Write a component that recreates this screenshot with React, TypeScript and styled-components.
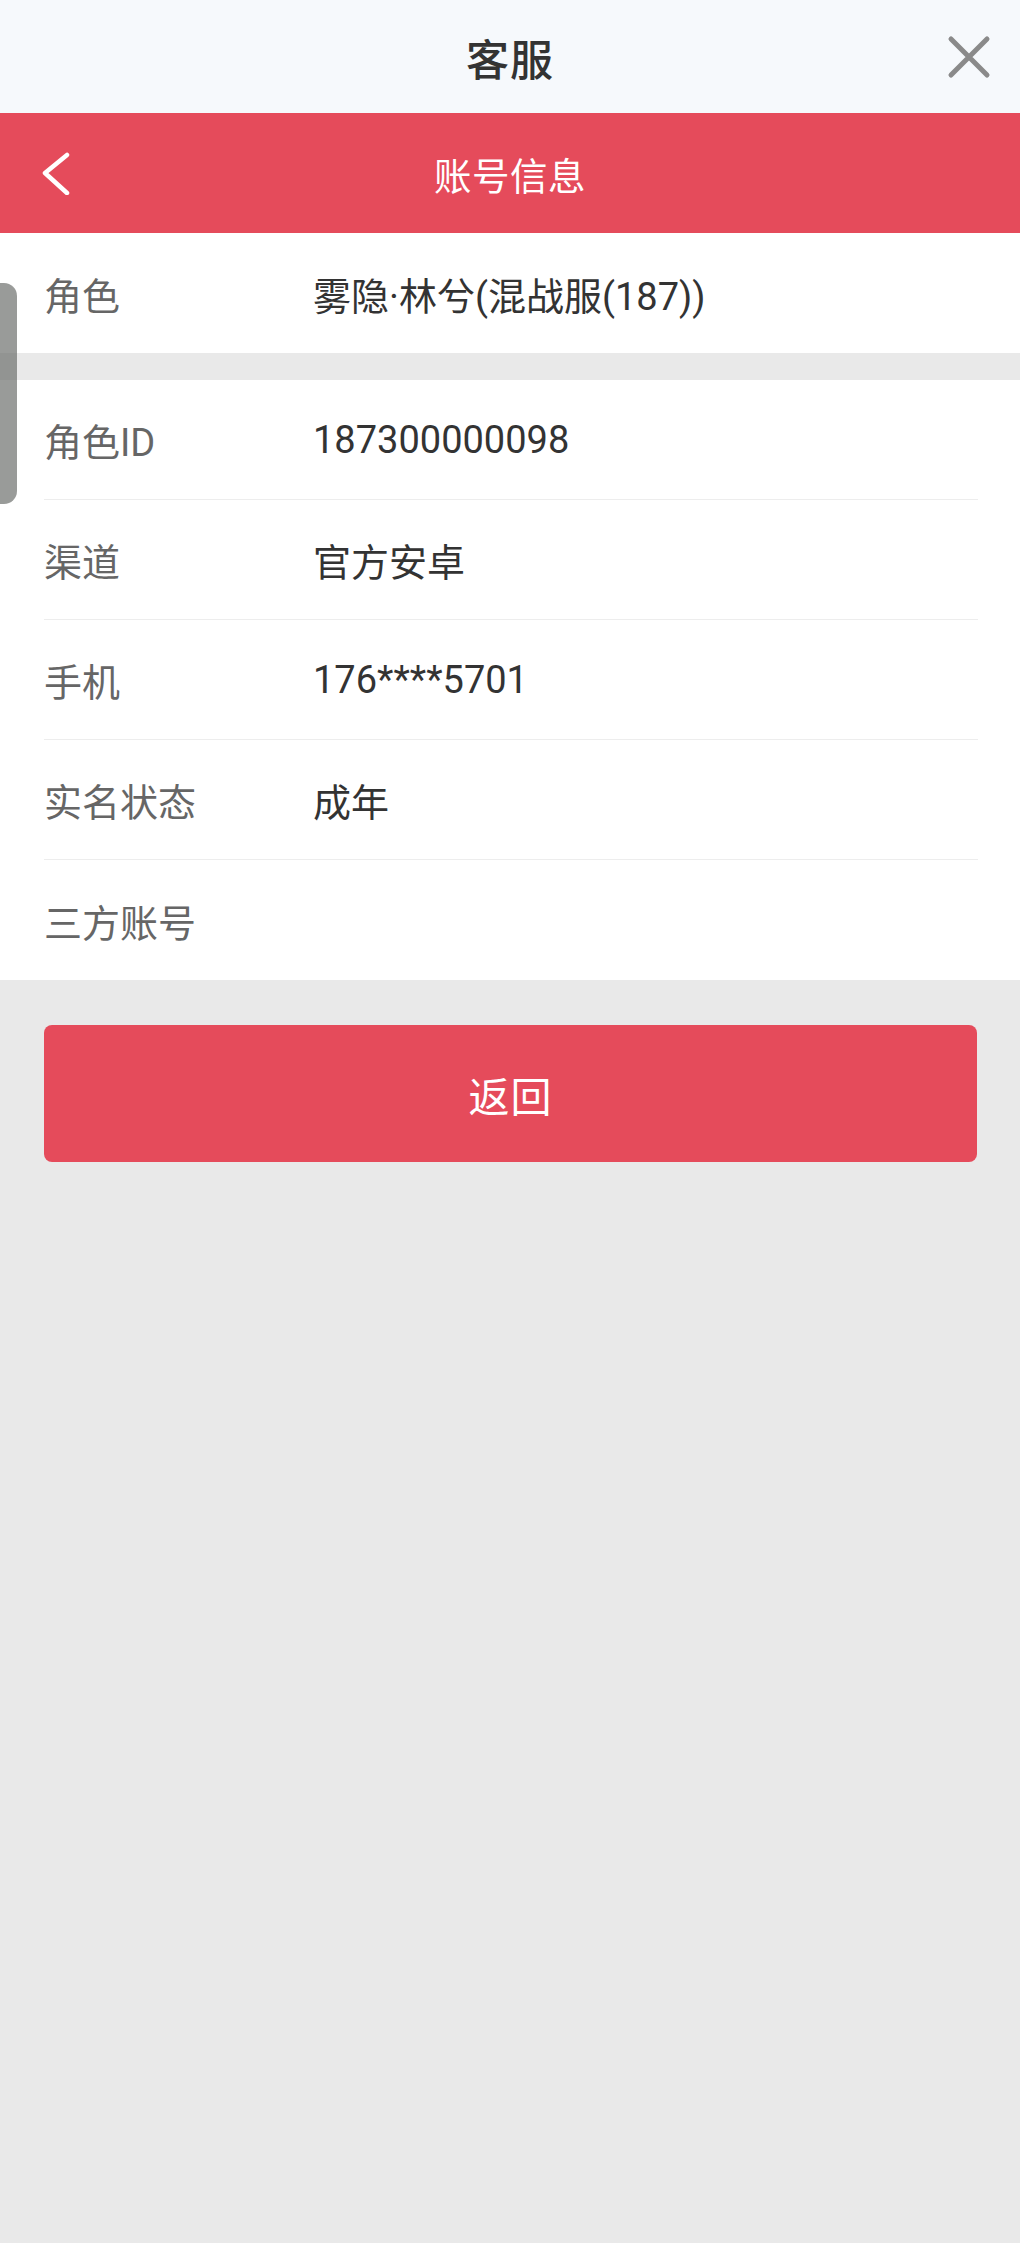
import React from "react";
import styled, { createGlobalStyle } from "styled-components";

const GlobalStyle = createGlobalStyle`
  html, body {
    margin: 0;
    padding: 0;
    background: #e9e9e9;
  }
  body {
    font-family: Roboto, "Noto Sans CJK SC", "Noto Sans", sans-serif;
  }
`;

const Page = styled.div`
  position: relative;
  width: 1020px;
  min-height: 2243px;
  background: #e9e9e9;
`;

const TopBar = styled.div`
  height: 113px;
  background: #f6f9fc;
  display: flex;
  align-items: center;
  justify-content: center;
  position: relative;

  h1 {
    margin: 0;
    font-size: 43px;
    font-weight: 500;
    color: #333;
    letter-spacing: 1px;
  }
`;

const CloseButton = styled.button`
  position: absolute;
  right: 28px;
  top: 34px;
  width: 46px;
  height: 46px;
  padding: 0;
  border: none;
  background: none;
  display: flex;
  align-items: center;
  justify-content: center;
`;

const Header = styled.div`
  height: 120px;
  background: #e54b5b;
  display: flex;
  align-items: center;
  justify-content: center;
  position: relative;

  h2 {
    margin: 0;
    font-size: 37.5px;
    font-weight: 400;
    color: #fff;
    letter-spacing: 0.5px;
  }
`;

const BackButton = styled.button`
  position: absolute;
  left: 36px;
  top: 38px;
  width: 44px;
  height: 44px;
  padding: 0;
  border: none;
  background: none;
`;

const Card = styled.div<{ gapTop?: boolean }>`
  background: #fff;
  margin-top: ${(p) => (p.gapTop ? "27px" : "0")};
  padding: 0 42px 0 44px;
`;

const Row = styled.div<{ last?: boolean }>`
  height: ${(p) => (p.last ? "120px" : "119px")};
  display: flex;
  align-items: center;
  border-bottom: ${(p) => (p.last ? "none" : "1px solid #ededed")};
  font-size: 38px;
`;

const Label = styled.span`
  width: 269px;
  flex-shrink: 0;
  color: #666;
`;

const Value = styled.span`
  color: #333;
`;

const Actions = styled.div`
  padding: 45px 43px 0 44px;
`;

const ReturnButton = styled.button`
  width: 100%;
  height: 137px;
  border: none;
  border-radius: 8px;
  background: #e54b5b;
  color: #fff;
  font-family: Roboto, "Noto Sans CJK SC", sans-serif;
  font-size: 41px;
  letter-spacing: 1px;
`;

const SideHandle = styled.div`
  position: absolute;
  left: 0;
  top: 283px;
  width: 17px;
  height: 221px;
  border-radius: 0 13px 13px 0;
  background: rgba(105, 108, 105, 0.68);
`;

const rows = [
  { label: "角色ID", value: "187300000098" },
  { label: "渠道", value: "官方安卓" },
  { label: "手机", value: "176****5701" },
  { label: "实名状态", value: "成年" },
  { label: "三方账号", value: "" },
];

export default function App() {
  return (
    <Page>
      <GlobalStyle />
      <TopBar>
        <h1>客服</h1>
        <CloseButton aria-label="关闭">
          <svg width="44" height="44" viewBox="0 0 44 44">
            <path
              d="M4 4 L40 40 M40 4 L4 40"
              stroke="#8a8a8a"
              strokeWidth="5"
              strokeLinecap="round"
            />
          </svg>
        </CloseButton>
      </TopBar>
      <Header>
        <BackButton aria-label="返回">
          <svg width="44" height="44" viewBox="0 0 44 44">
            <path
              d="M31 4 L9 22 L31 42"
              fill="none"
              stroke="#fff"
              strokeWidth="4.5"
              strokeLinecap="round"
              strokeLinejoin="round"
            />
          </svg>
        </BackButton>
        <h2>账号信息</h2>
      </Header>

      <Card>
        <Row last>
          <Label>角色</Label>
          <Value>雾隐·林兮(混战服(187))</Value>
        </Row>
      </Card>

      <Card gapTop>
        {rows.map((r, i) => (
          <Row key={r.label} last={i === rows.length - 1}>
            <Label>{r.label}</Label>
            <Value>{r.value}</Value>
          </Row>
        ))}
      </Card>

      <Actions>
        <ReturnButton>返回</ReturnButton>
      </Actions>

      <SideHandle />
    </Page>
  );
}
